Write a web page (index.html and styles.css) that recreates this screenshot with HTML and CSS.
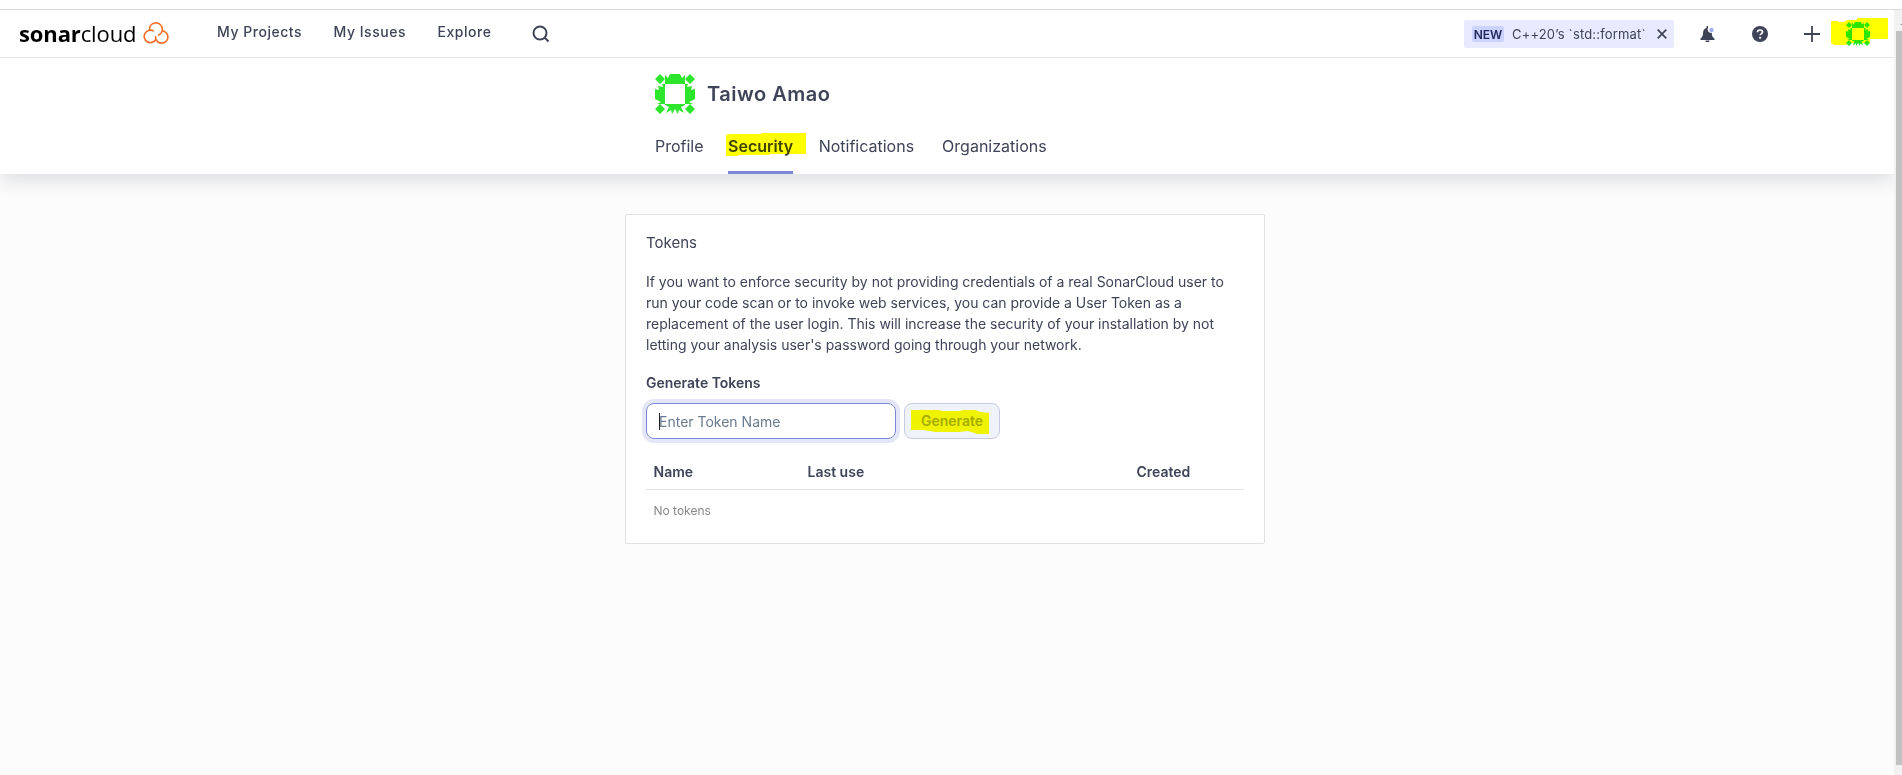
FILE: index.html
```
<!DOCTYPE html>
<html lang="en">
<head>
<meta charset="utf-8">
<title>Security - My Account</title>
<link rel="stylesheet" href="styles.css">
</head>
<body>
<svg class="defs" width="0" height="0">
  <symbol id="identicon" viewBox="0 0 40 40">
    <path d="M5 0l5 5-5 5-5-5zM35 0l5 5-5 5-5-5zM5 30l5 5-5 5-5-5zM35 30l5 5-5 5-5-5z"/>
    <path d="M15 0h10l2 4 3-3v9H10V1l3 3z"/>
    <path d="M10 10v20H2l4-2-6-3V15l4 1-1-4 5 1-1-3zM30 10v20h8l-4-2 6-3V15l-4 1 1-4-5 1 1-3z"/>
    <path d="M10 30h20v1l-4 2 3 6-5-3-1 4-3-5-3 5-1-4-5 3 3-6-4-2z"/>
  </symbol>
</svg>
<div class="window">
  <div class="page">
    <nav class="navbar">
      <a class="logo"><span class="logo-text"><b>sonar</b>cloud</span>
        <svg class="logo-mark" width="26" height="23" viewBox="0 0 26 23" fill="none" stroke="#f3702a" stroke-width="1.700" stroke-linecap="round"><path d="M10.300 8.900A6.200 6.200 0 1 0 12.600 17.800"/><path d="M6.600 8A6.400 6.400 0 1 1 15.800 13"/><path d="M19.200 8.800A6.200 6.200 0 1 1 12.500 14.600"/></svg>
      </a>
      <a class="nav-link projects">My Projects</a>
      <a class="nav-link issues">My Issues</a>
      <a class="nav-link explore">Explore</a>
      <svg class="search" width="18" height="18" viewBox="0 0 18 18" fill="none" stroke="#3e4357" stroke-width="2"><circle cx="8" cy="8" r="6.500"/><path d="M12.500 12.500l4 4"/></svg>
      <div class="promo"><span class="badge">NEW</span><span class="promo-text">C++20’s `std::format`</span>
        <svg width="10" height="10" viewBox="0 0 10 10" stroke="#3e4357" stroke-width="1.700"><path d="M.7.700l8.600 8.600M9.300.700L.7 9.300"/></svg></div>
      <svg class="bell" width="16" height="16" viewBox="0 0 16 16" fill="#3e4357"><path d="M6.500 0H8v2C7.500 3 7.600 4.300 8.200 5.200c.8 1.300 2.200 1.900 3.600 1.600.1 3.400.7 4.200 2.700 5.700V14h-14v-1.500c2-1.500 2.300-2.500 2.500-5.500C3.200 4 4.500 2.500 6.500 2zM5.500 14.500h4a2 2 0 0 1-4 0z"/><circle cx="11.500" cy="4" r="2.200" fill="#a5adf0"/></svg>
      <svg class="help" width="16" height="16" viewBox="0 0 16 16"><circle cx="8" cy="8" r="8" fill="#3e4357"/><path d="M5.500 6.200C5.500 4.600 6.500 4 8 4s2.500.8 2.500 2c0 1.600-2.300 1.600-2.300 3.300" fill="none" stroke="#fff" stroke-width="1.700"/><circle cx="8.100" cy="11.800" r="1.150" fill="#fff"/></svg>
      <svg class="plus" width="16" height="16" viewBox="0 0 16 16" stroke="#3e4357" stroke-width="1.800"><path d="M8 0v16M0 8h16"/></svg>
      <div class="account"><svg width="24" height="24" fill="#2ee52e"><use href="#identicon"/></svg>
        <svg class="marker marker-account" width="57" height="27" viewBox="0 0 57 27" fill="#ff0"><path d="M0 3h7l1 1h5l3-2h9l2-2h30v21H39v4H17l-2 2H3l-3-2z"/></svg></div>
    </nav>
    <header class="header">
      <div class="header-inner">
        <div class="user"><svg width="40" height="40" fill="#2ee52e"><use href="#identicon"/></svg><h1>Taiwo Amao</h1></div>
        <div class="tabs">
          <a class="tab profile">Profile</a>
          <a class="tab active">Security<svg class="marker marker-tab" width="80" height="24" viewBox="0 0 80 24" fill="#ff0"><path d="M0 2l4-1h31V0h45v21H43v1H12v1H0z"/></svg></a>
          <a class="tab notifications">Notifications</a>
          <a class="tab">Organizations</a>
        </div>
      </div>
    </header>
    <main class="card">
      <h2>Tokens</h2>
      <p>If you want to enforce security by not providing credentials of a real SonarCloud user to<br>run your code scan or to invoke web services, you can provide a User Token as a<br>replacement of the user login. This will increase the security of your installation by not<br>letting your analysis user's password going through your network.</p>
      <h3>Generate Tokens</h3>
      <div class="form">
        <div class="field"><i class="caret"></i><span>Enter Token Name</span></div>
        <div class="button"><span>Generate</span><svg class="marker marker-button" width="78" height="25" viewBox="0 0 78 25" fill="#ff0"><path d="M0 1h28l3 1h17l4-1h12l6 2 8 1v21H66l-6-2-3-1-9 1H24l-5-1-7-1H0z"/></svg></div>
      </div>
      <div class="row head"><span>Name</span><span>Last use</span><span>Created</span></div>
      <div class="row empty"><span>No tokens</span></div>
    </main>
  </div>
  <aside class="scrollbar"><i class="arrow"></i><div class="thumb"></div></aside>
</div>
</body>
</html>
```
FILE: styles.css
```
* { box-sizing: border-box; }
body { margin: 0; font-family: Inter, "Liberation Sans", sans-serif; color: #3e4357; background: #fff; overflow: hidden; }
.defs { display: block; }
.window { display: flex; height: 766px; margin-top: 9px; border-top: 1px solid #d9d9d9; }
.page { flex: 1; min-width: 0; overflow: hidden; background: #fcfcfc; }
.scrollbar { width: 8px; background: #f1f1f1; padding-left: 2px; overflow: hidden; }
.arrow { display: block; margin: 12px 0 6px 4px; width: 0; height: 3px; border: 4px solid transparent; border-top: 0; border-bottom: 3px solid #8a8a8a; }
.thumb { height: 734px; background: #c1c1c1; }
.navbar { position: relative; z-index: 1; display: flex; align-items: flex-start; height: 48px; background: #fff; border-bottom: 1px solid #e6e6e6; padding-left: 19px; }
.navbar > * { flex: none; }
.logo { display: flex; width: 198px; }
.logo-text { width: 124px; margin-top: 9px; font: 22px/28px "Open Sans", sans-serif; letter-spacing: -0.12px; color: #000; white-space: nowrap; }
.logo-mark { margin-top: 12px; }
.nav-link { margin-top: 12px; font-size: 14px; line-height: 20px; font-weight: 500; letter-spacing: 0.53px; white-space: nowrap; }
.projects { width: 116.5px; }
.issues { width: 104px; }
.explore { width: 94.5px; }
.search { margin-top: 15px; }
.promo { display: flex; align-items: center; width: 210px; height: 28px; margin: 10px 26px 0 auto; padding: 0 7px 0 8px; background: #e8ebff; border-radius: 2px; font-size: 13px; white-space: nowrap; }
.badge { width: 32px; height: 16px; margin-right: 8px; text-align: center; background: #ccd3ff; border-radius: 2px; font-size: 12px; line-height: 17px; font-weight: 600; color: #23285a; }
.promo-text { flex: 1; letter-spacing: 0.16px; }
.bell { margin: 16px 36px 0 0; }
.help { margin: 16px 36px 0 0; }
.plus { margin: 16px 26px 0 0; }
.account { position: relative; width: 48px; padding-top: 12px; }
.account > svg { display: block; }
.marker { position: absolute; mix-blend-mode: multiply; }
.marker-account { left: -15px; top: 8px; }
.header { height: 116px; background: #fff; box-shadow: 0 5px 20px rgba(62, 67, 87, 0.18); padding-top: 16px; }
.header-inner { width: 640px; margin-left: 655px; }
.user { display: flex; align-items: center; gap: 12px; height: 40px; }
h1 { margin: 0; font-size: 20px; font-weight: 600; letter-spacing: 0.5px; }
.tabs { display: flex; gap: 25px; margin-top: 20px; }
.tab { position: relative; height: 40px; font-size: 16px; line-height: 24px; }
.profile { margin-right: -0.5px; }
.notifications { margin: 0 3px 0 0.5px; }
.tab.active { font-weight: 600; border-bottom: 3px solid #7b87d9; }
.marker-tab { left: -2px; top: -1px; }
.card { width: 640px; height: 330px; margin: 40px 0 0 625px; padding: 17px 20px; background: #fff; border: 1px solid #e1e1e1; border-radius: 2px; }
h2 { margin: 0; font-size: 15px; line-height: 22px; font-weight: 400; }
p { margin: 17px 0 0; font-size: 14px; line-height: 21px; letter-spacing: -0.015px; white-space: nowrap; }
h3 { margin: 18px 0 0; font-size: 14px; line-height: 20px; font-weight: 600; }
.form { display: flex; gap: 8px; margin-top: 10px; }
.field { display: flex; align-items: center; width: 250px; height: 36px; padding-left: 12px; border: 1px solid #7b87d9; border-radius: 8px; box-shadow: 0 0 0 4px #e4e6f7; font-size: 14px; line-height: 20px; color: #697b90; }
.field span { margin-left: -1px; padding-top: 2px; }
.caret { width: 1px; height: 17px; background: #222; }
.button { position: relative; width: 96px; height: 36px; border: 1px solid #c5cae0; border-radius: 8px; background: #eff2f9; font-size: 14px; line-height: 34px; font-weight: 600; text-align: center; color: #a6adc5; }
.marker-button { left: 6px; top: 5px; }
.row { display: grid; grid-template-columns: 154px 329px 1fr; padding-left: 7.5px; font-size: 14px; }
.head { height: 41px; margin-top: 10px; padding-top: 11px; line-height: 24px; font-weight: 600; border-bottom: 1px solid #e1e1e1; }
.empty { font-size: 12px; line-height: 20px; margin-top: 11px; color: #888; }
```
